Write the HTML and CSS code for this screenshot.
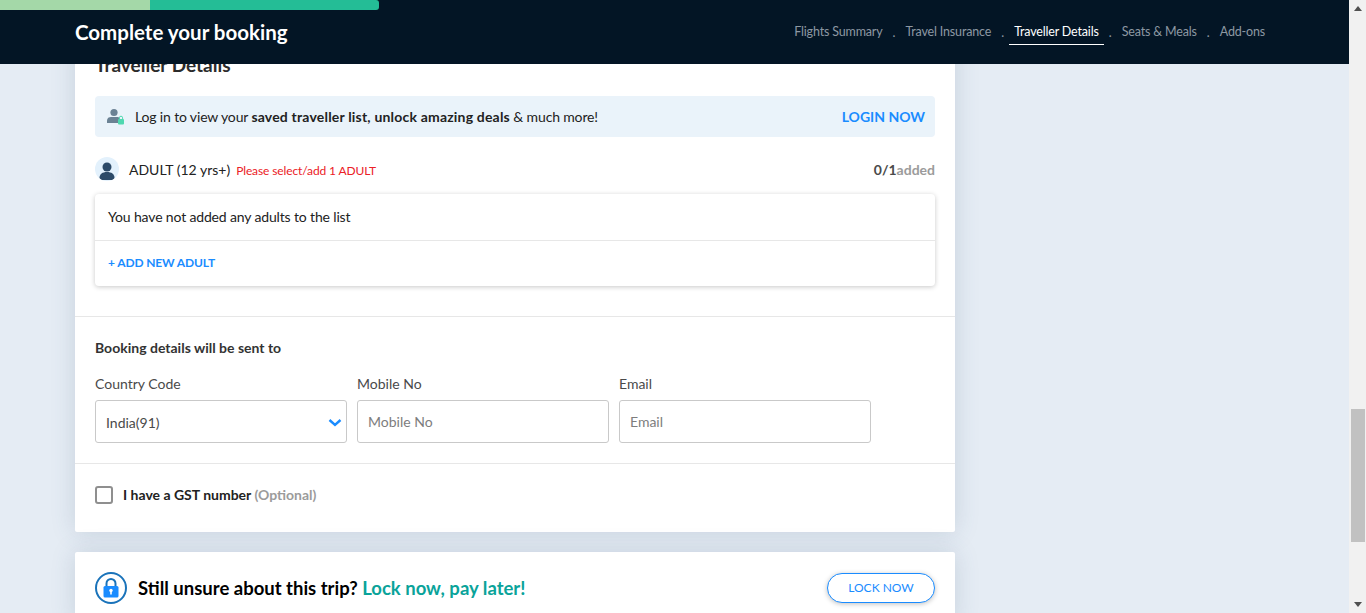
FILE: index.html
```html
<!DOCTYPE html>
<html lang="en">
<head>
  <meta charset="UTF-8">
  <title>Complete your booking</title>
  <link rel="stylesheet" href="styles.css">
</head>
<body>
  <div class="window">
    <div class="viewport">
      <header class="topbar">
        <div class="progress"><div class="progress-done"></div></div>
        <div class="topbar-row">
          <h1>Complete your booking</h1>
          <nav class="steps">
            <a>Flights Summary</a><span class="dot">.</span>
            <a>Travel Insurance</a><span class="dot">.</span>
            <a class="active">Traveller Details</a><span class="dot">.</span>
            <a>Seats &amp; Meals</a><span class="dot">.</span>
            <a>Add-ons</a>
          </nav>
        </div>
      </header>

      <main class="content">
        <section class="card">
          <div class="traveller">
            <h2>Traveller Details</h2>
            <div class="login-banner">
              <svg class="login-icon" width="18" height="18" viewBox="0 0 18 18">
                <circle cx="7" cy="4.500" r="3.600" fill="#6b8294"/>
                <path d="M0 15v-2.500C0 10 2 9 4 9h6c1 0 2 .3 2.500 1v5z" fill="#6b8294"/>
                <rect x="11" y="11" width="6" height="5.500" rx="1" fill="#4fd8b0"/>
                <path d="M12.400 11V9.800a1.600 1.600 0 0 1 3.200 0V11" fill="none" stroke="#4fd8b0"/>
              </svg>
              <span class="login-text">Log in to view your <b>saved traveller list, unlock amazing deals</b> &amp; much more!</span>
              <a class="login-link">LOGIN NOW</a>
            </div>
            <div class="adult-row">
              <span class="avatar">
                <svg width="24" height="24" viewBox="0 0 24 24">
                  <circle cx="12" cy="10" r="4.500" fill="#2c4a68"/>
                  <path d="M4.500 21c0-4 3-6 7.500-6s7.500 2 7.500 6c0 1-1 2-2 2h-11c-1 0-2-1-2-2z" fill="#2c4a68"/>
                </svg>
              </span>
              <span class="adult-name">ADULT (12 yrs+)</span>
              <span class="adult-error">Please select/add 1 ADULT</span>
              <span class="adult-count">0/1<em>added</em></span>
            </div>
            <div class="adult-list">
              <div class="adult-empty">You have not added any adults to the list</div>
              <a class="adult-add">+ ADD NEW ADULT</a>
            </div>
          </div>

          <div class="contact">
            <h3>Booking details will be sent to</h3>
            <div class="fields">
              <div class="field">
                <label>Country Code</label>
                <div class="select">
                  <span class="select-value">India(91)</span>
                  <svg width="14" height="9" viewBox="0 0 14 9"><path d="M1.500 2l5.500 5 5.500-5" fill="none" stroke="#1a8cff" stroke-width="2.400"/></svg>
                </div>
              </div>
              <div class="field">
                <label for="mobile">Mobile No</label>
                <input id="mobile" type="text" placeholder="Mobile No">
              </div>
              <div class="field">
                <label for="email">Email</label>
                <input id="email" type="text" placeholder="Email">
              </div>
            </div>
          </div>

          <div class="gst">
            <span class="checkbox"></span>
            <span class="gst-text">I have a GST number <em>(Optional)</em></span>
          </div>
        </section>

        <section class="card lock-card">
          <svg width="32" height="32" viewBox="0 0 32 32">
            <circle cx="16" cy="16" r="15" fill="#fff" stroke="#1a73ba" stroke-width="2"/>
            <path d="M11.500 15v-3.500a4.500 4.500 0 0 1 9 0V15" fill="none" stroke="#1a73ba" stroke-width="2"/>
            <rect x="8.500" y="14" width="15" height="11.500" rx="1.500" fill="#1a8cff"/>
            <circle cx="16" cy="18.500" r="1.700" fill="#fff"/>
            <rect x="15.200" y="19" width="1.600" height="3.500" fill="#fff"/>
          </svg>
          <p class="lock-text">Still unsure about this trip? <span>Lock now, pay later!</span></p>
          <a class="lock-btn">LOCK NOW</a>
        </section>
      </main>
    </div>

    <div class="scrollbar">
      <span class="arrow arrow-up"></span>
      <div class="scroll-track"><div class="scroll-thumb"></div></div>
      <span class="arrow arrow-down"></span>
    </div>
  </div>
</body>
</html>
```

FILE: styles.css
```css
* {
  box-sizing: border-box;
}

body {
  margin: 0;
  font-family: Lato, "Open Sans", sans-serif;
  color: #222;
  background: #e5ecf4;
}

.window {
  display: flex;
  height: 613px;
  overflow: hidden;
}

.viewport {
  flex: 1;
  position: relative;
  overflow: hidden;
}

/* header stays on top, the page is scrolled underneath */
.topbar {
  position: absolute;
  top: 0;
  left: 0;
  right: 0;
  height: 64px;
  background: #031525;
  z-index: 2;
}

.progress {
  width: 379px;
  height: 10px;
  background: #24bd96;
  border-radius: 0 3px 3px 0;
  overflow: hidden;
}

.progress-done {
  width: 150px;
  height: 10px;
  background: #a4d8a8;
}

.topbar-row {
  display: flex;
  align-items: center;
  justify-content: space-between;
  padding: 0 79px 0 75px;
  height: 44px;
}

.topbar-row h1 {
  margin: 0;
  font-size: 20.500px;
  font-weight: 700;
  color: #fff;
}

.steps {
  display: flex;
  align-items: center;
  font-size: 12.500px;
  letter-spacing: -0.17px;
  color: #8d98a3;
}

.steps a {
  padding: 5px 5px 5px;
  border-bottom: 1px solid transparent;
}

.steps a.active {
  color: #fff;
  border-bottom-color: #fff;
}

.dot {
  width: 13px;
  text-align: center;
}

.content {
  padding: 43px 0 0 75px;
}

.card {
  width: 880px;
  background: #fff;
  border-radius: 2px;
  box-shadow: 0 0 25px rgba(60, 90, 120, 0.18);
}

.traveller {
  padding: 10px 20px 30px;
  border-bottom: 1px solid #e7e7e7;
}

.traveller h2 {
  margin: 0;
  font-size: 19px;
  font-weight: 700;
  line-height: 24px;
  color: #2b2b2b;
}

.login-banner {
  display: flex;
  align-items: center;
  height: 41px;
  margin-top: 19px;
  padding: 0 10px 0 12px;
  background: #eaf3fa;
  border-radius: 4px;
}

.login-icon {
  margin-right: 10px;
}

.login-text {
  flex: 1;
  font-size: 14px;
  letter-spacing: -0.15px;
}

.login-text b {
  letter-spacing: 0.19px;
}

.login-link {
  font-size: 14px;
  font-weight: 700;
  color: #1a8cff;
}

.adult-row {
  display: flex;
  align-items: center;
  height: 24px;
  margin-top: 20px;
}

.avatar {
  width: 24px;
  height: 24px;
  margin-right: 10px;
  border-radius: 50%;
  background: #e3f1fc;
  overflow: hidden;
}

.adult-name {
  font-size: 14px;
  margin-right: 6px;
}

.adult-error {
  flex: 1;
  padding-top: 2px;
  font-size: 12px;
  letter-spacing: -0.12px;
  color: #eb2026;
}

.adult-count {
  font-size: 14px;
  font-weight: 700;
  color: #4a4a4a;
}

.adult-count em {
  font-style: normal;
  color: #9b9b9b;
}

.adult-list {
  margin-top: 13px;
  border-radius: 4px;
  box-shadow: 0 1px 5px rgba(0, 0, 0, 0.22);
}

.adult-empty {
  height: 47px;
  padding: 0 13px;
  font-size: 14px;
  letter-spacing: -0.15px;
  line-height: 46px;
  border-bottom: 1px solid #e7e7e7;
}

.adult-add {
  display: block;
  height: 45px;
  padding: 0 13px;
  font-size: 12px;
  font-weight: 700;
  letter-spacing: -0.13px;
  line-height: 44px;
  color: #1a8cff;
}

.contact {
  padding: 22px 20px 20px;
  border-bottom: 1px solid #e7e7e7;
}

.contact h3 {
  margin: 0 0 19px;
  font-size: 14px;
  font-weight: 700;
  line-height: 17px;
  color: #333;
}

.fields {
  display: flex;
  gap: 10px;
}

.field {
  width: 252px;
}

.field label {
  display: block;
  margin-bottom: 8px;
  font-size: 14px;
  line-height: 17px;
  color: #4a4a4a;
}

.field input,
.select {
  display: flex;
  align-items: center;
  justify-content: space-between;
  width: 100%;
  height: 43px;
  padding: 0 10px;
  font-family: inherit;
  font-size: 14px;
  color: #4a4a4a;
  background: #fff;
  border: 1px solid #c9c9c9;
  border-radius: 3px;
}

.select-value,
.select svg {
  margin-top: 2px;
}

.select svg {
  margin-right: -6px;
}

.field input::placeholder {
  color: #7d7d7d;
}

.gst {
  display: flex;
  align-items: center;
  height: 68px;
  padding: 0 20px 6px;
}

.checkbox {
  width: 18px;
  height: 18px;
  margin-right: 10px;
  border: 2px solid #8f8f8f;
  border-radius: 3px;
}

.gst-text {
  margin-bottom: 2px;
  font-size: 14px;
  font-weight: 700;
  color: #222;
}

.gst-text em {
  font-style: normal;
  color: #9b9b9b;
}

.lock-card {
  display: flex;
  align-items: center;
  height: 72px;
  margin-top: 20px;
  padding: 0 20px;
}

.lock-text {
  flex: 1;
  margin: 0 0 0 11px;
  font-size: 18.500px;
  font-weight: 700;
  color: #000;
}

.lock-text span {
  color: #0aa39a;
}

.lock-btn {
  width: 108px;
  height: 30px;
  font-size: 12px;
  line-height: 28px;
  text-align: center;
  color: #1a8cff;
  background: #fff;
  border: 1px solid #1a8cff;
  border-radius: 15px;
  box-shadow: 0 1px 5px rgba(0, 0, 0, 0.25);
}

.scrollbar {
  display: flex;
  flex-direction: column;
  width: 17px;
  background: #f1f1f1;
}

.scroll-track {
  flex: 1;
  padding: 392px 1px 0 2px;
}

.scroll-thumb {
  height: 133px;
  background: #c1c1c1;
}

.arrow {
  display: block;
  width: 0;
  height: 0;
  margin: 6px auto;
  border-left: 4px solid transparent;
  border-right: 4px solid transparent;
}

.arrow-up {
  border-bottom: 5px solid #505050;
}

.arrow-down {
  border-top: 5px solid #505050;
}
```
